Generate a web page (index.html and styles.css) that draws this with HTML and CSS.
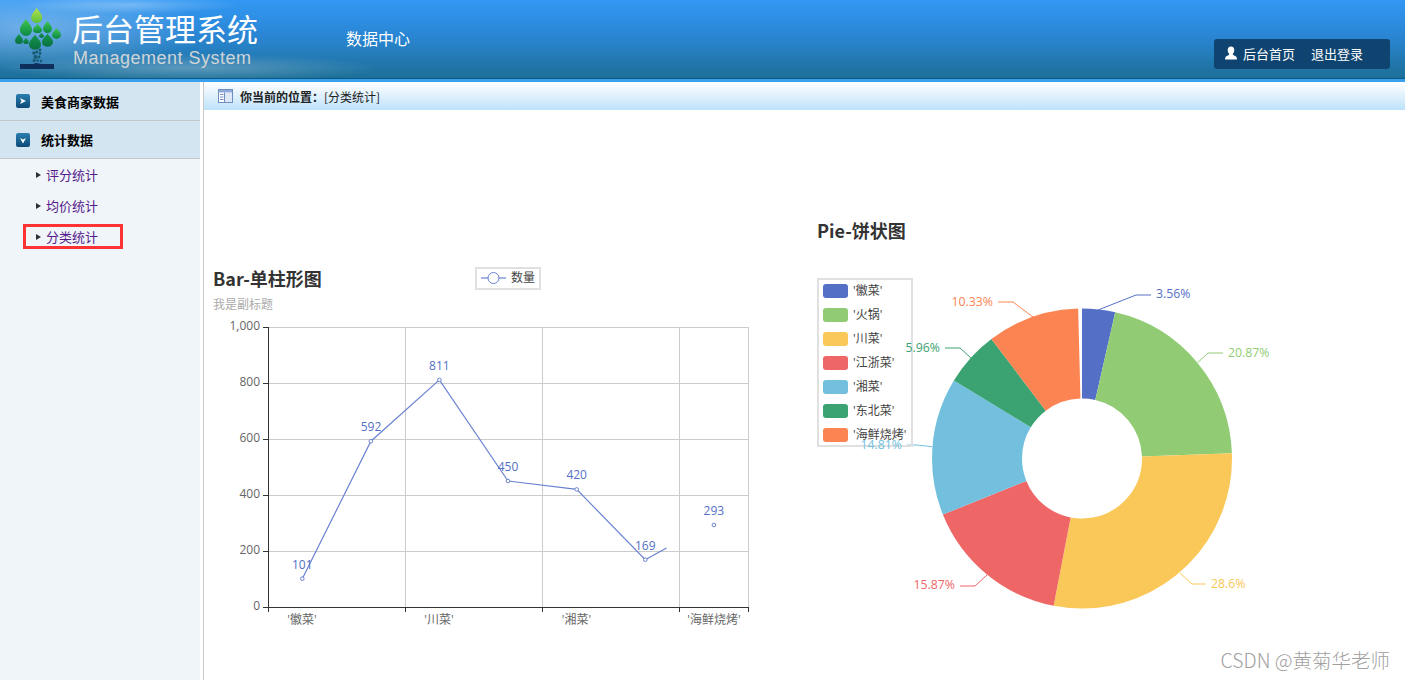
FILE: index.html
```html
<!DOCTYPE html>
<html lang="en">
<head>
    <meta charset="UTF-8">
    <title>后台管理系统</title>
    <link rel="stylesheet" href="styles.css">
</head>
<body>

<div class="header">
    <svg class="logo" viewBox="0 0 73 78" xmlns="http://www.w3.org/2000/svg">
        <defs>
            <linearGradient id="leafTop" x1="0" y1="0" x2="0" y2="1">
                <stop offset="0" stop-color="#b4e04a"></stop>
                <stop offset="1" stop-color="#5cc23e"></stop>
            </linearGradient>
            <linearGradient id="leaf" x1="0" y1="0" x2="0" y2="1">
                <stop offset="0" stop-color="#3fc850"></stop>
                <stop offset="1" stop-color="#0b8746"></stop>
            </linearGradient>
            <linearGradient id="leafDark" x1="0" y1="0" x2="0" y2="1">
                <stop offset="0" stop-color="#12964a"></stop>
                <stop offset="1" stop-color="#0a7044"></stop>
            </linearGradient>
            <path id="drop" d="M0 -11C3 -6 7 -3 7 2A7 7 0 0 1 -7 2C-7 -3 -3 -6 0 -11Z"></path>
        </defs>
        <use href="#drop" transform="translate(36.7 16.3) scale(.79 .75)" fill="url(#leafTop)"></use>
        <use href="#drop" transform="translate(26 28.4) scale(.86 .85)" fill="url(#leaf)"></use>
        <use href="#drop" transform="translate(37.5 29) scale(.64 .45)" fill="url(#leaf)"></use>
        <use href="#drop" transform="translate(47.5 27.6) scale(.64 .6)" fill="url(#leaf)"></use>
        <use href="#drop" transform="translate(56.5 34) scale(.64 .55)" fill="url(#leaf)"></use>
        <use href="#drop" transform="translate(19 39.5) scale(.57 .5)" fill="url(#leafDark)"></use>
        <use href="#drop" transform="translate(26 41.3) scale(.4 .3)" fill="url(#leafDark)"></use>
        <use href="#drop" transform="translate(35 43) scale(.86 .75)" fill="url(#leafDark)"></use>
        <use href="#drop" transform="translate(41.5 35.8) scale(.36 .25)" fill="url(#leafDark)"></use>
        <use href="#drop" transform="translate(47.5 41) scale(.79 .65)" fill="url(#leafDark)"></use>
        <g fill="#155a70">
            <circle cx="34" cy="53" r="1.8"></circle>
            <circle cx="37" cy="52" r="1.4"></circle>
            <circle cx="40" cy="50" r="1.4"></circle>
            <circle cx="40" cy="53.5" r="1.4"></circle>
            <circle cx="35.5" cy="57" r="2"></circle>
            <circle cx="39" cy="57" r="1.4"></circle>
            <circle cx="34" cy="60.5" r="1.5"></circle>
            <circle cx="37.5" cy="60.5" r="1.3"></circle>
            <circle cx="41" cy="61" r="1.2"></circle>
        </g>
        <path d="M20 64H33L36 63L42 64H54V69H20Z" fill="#0e2f5c"></path>
    </svg>
    <div class="brand">
        <div class="brand-title">后台管理系统</div>
        <div class="brand-sub">Management System</div>
    </div>
    <div class="top-nav">数据中心</div>
    <div class="user-box">
        <svg class="user-icon" viewBox="0 0 14 14" xmlns="http://www.w3.org/2000/svg">
            <path d="M7 0.5C9.2 0.5 10.3 2.2 10.3 4.2C10.3 5.8 9.6 7 8.8 7.8C8.6 8.6 9 9 10 9.4C12 10.1 13 10.8 13 13.5H1C1 10.8 2 10.1 4 9.4C5 9 5.4 8.6 5.2 7.8C4.4 7 3.7 5.8 3.7 4.2C3.7 2.2 4.8 0.5 7 0.5Z" fill="#fff"></path>
        </svg>
        <span>后台首页</span>
        <span>退出登录</span>
    </div>
</div>

<div class="page">
    <div class="sidebar">
        <div class="menu-title">
            <svg class="menu-icon" viewBox="0 0 14 14" xmlns="http://www.w3.org/2000/svg">
                <defs>
                    <linearGradient id="menuBlue" x1="0" y1="0" x2="0" y2="1">
                        <stop offset="0" stop-color="#2a7fb0"></stop>
                        <stop offset="1" stop-color="#0d4a78"></stop>
                    </linearGradient>
                </defs>
                <rect width="14" height="14" rx="2" fill="url(#menuBlue)"></rect>
                <path d="M4 4L10 7L4 10L5.5 7Z" fill="#fff"></path>
            </svg>
            美食商家数据
        </div>
        <div class="menu-title">
            <svg class="menu-icon" viewBox="0 0 14 14" xmlns="http://www.w3.org/2000/svg">
                <rect width="14" height="14" rx="2" fill="url(#menuBlue)"></rect>
                <path d="M4 5L7 6.5L10 5L7 10.5Z" fill="#fff"></path>
            </svg>
            统计数据
        </div>
        <ul class="sub-menu">
            <li><a href="#">评分统计</a></li>
            <li><a href="#">均价统计</a></li>
            <li class="marked"><a href="#">分类统计</a></li>
        </ul>
    </div>

    <div class="main">
        <div class="crumb">
            <svg class="crumb-icon" viewBox="0 0 15 14" xmlns="http://www.w3.org/2000/svg">
                <rect x="0.5" y="0.5" width="14" height="13" fill="#fff" stroke="#6f8fc4"></rect>
                <rect x="1" y="1" width="13" height="2.5" fill="#8fa9d8"></rect>
                <path d="M6.5 3.5V13.5" stroke="#6f8fc4"></path>
                <path d="M2 5.5H5.5M2 8H5.5M2 10.5H5.5" stroke="#6f8fc4"></path>
                <rect x="7" y="4" width="7" height="9" fill="#dfe8f6"></rect>
            </svg>
            <b>你当前的位置：</b>[分类统计]
        </div>
        <div class="charts">
            <!-- 折线图 -->
            <svg class="chart-bar" viewBox="204 110 600 570" xmlns="http://www.w3.org/2000/svg">
                <text class="chart-title" x="213" y="286">Bar-单柱形图</text>
                <text class="chart-sub" x="213" y="309">我是副标题</text>

                <rect class="legend-box" x="476" y="268" width="64" height="21"></rect>
                <path class="series" d="M481 278H506"></path>
                <circle class="series-dot" cx="493.5" cy="278" r="5.5"></circle>
                <text class="legend-text" x="511" y="282">数量</text>

                <path class="grid" d="M268.5 327.5H748.5M268.5 383.5H748.5M268.5 439.5H748.5M268.5 495.5H748.5M268.5 551.5H748.5"></path>
                <path class="grid" d="M405.5 327V607M542.5 327V607M679.5 327V607M748.5 327V607"></path>
                <path class="axis" d="M268.5 327V607.5M263 327.5H268M263 383.5H268M263 439.5H268M263 495.5H268M263 551.5H268M263 607.5H748.5"></path>
                <path class="axis" d="M268.5 607V612M405.5 607V612M542.5 607V612M679.5 607V612M748.5 607V612"></path>

                <text class="tick tick-y" x="260" y="330">1,000</text>
                <text class="tick tick-y" x="260" y="386">800</text>
                <text class="tick tick-y" x="260" y="442">600</text>
                <text class="tick tick-y" x="260" y="498">400</text>
                <text class="tick tick-y" x="260" y="554">200</text>
                <text class="tick tick-y" x="260" y="610">0</text>

                <text class="tick tick-x" x="302" y="624">'徽菜'</text>
                <text class="tick tick-x" x="439" y="624">'川菜'</text>
                <text class="tick tick-x" x="576.5" y="624">'湘菜'</text>
                <text class="tick tick-x" x="714" y="624">'海鲜烧烤'</text>

                <polyline class="series" points="302.3,578.7 370.9,441.2 439.4,379.9 508,481 576.7,489.4 645.3,559.7 666.5,548"></polyline>
                <circle class="point" cx="302.3" cy="578.7" r="1.8"></circle>
                <circle class="point" cx="370.9" cy="441.2" r="1.8"></circle>
                <circle class="point" cx="439.4" cy="379.9" r="1.8"></circle>
                <circle class="point" cx="508" cy="481" r="1.8"></circle>
                <circle class="point" cx="576.7" cy="489.4" r="1.8"></circle>
                <circle class="point" cx="645.3" cy="559.7" r="1.8"></circle>
                <circle class="point" cx="713.9" cy="525" r="1.8"></circle>

                <text class="value" x="302.3" y="569">101</text>
                <text class="value" x="371" y="431">592</text>
                <text class="value" x="439.4" y="370">811</text>
                <text class="value" x="508" y="471">450</text>
                <text class="value" x="576.7" y="479">420</text>
                <text class="value" x="645.3" y="550">169</text>
                <text class="value" x="713.9" y="515">293</text>
            </svg>

            <!-- 环形饼图 -->
            <svg class="chart-pie" viewBox="804 110 601 570" xmlns="http://www.w3.org/2000/svg">
                <text class="chart-title" x="817" y="238">Pie-饼状图</text>

                <g class="donut" transform="rotate(-90 1082 458.5)">
                    <circle cx="1082" cy="458.5" r="105" pathLength="100" stroke="#5470c6" stroke-dasharray="3.56 100"></circle>
                    <circle cx="1082" cy="458.5" r="105" pathLength="100" stroke="#91cc75" stroke-dasharray="20.87 100" stroke-dashoffset="-3.56"></circle>
                    <circle cx="1082" cy="458.5" r="105" pathLength="100" stroke="#fac858" stroke-dasharray="28.6 100" stroke-dashoffset="-24.43"></circle>
                    <circle cx="1082" cy="458.5" r="105" pathLength="100" stroke="#ee6666" stroke-dasharray="15.87 100" stroke-dashoffset="-53.03"></circle>
                    <circle cx="1082" cy="458.5" r="105" pathLength="100" stroke="#73c0de" stroke-dasharray="14.81 100" stroke-dashoffset="-68.9"></circle>
                    <circle cx="1082" cy="458.5" r="105" pathLength="100" stroke="#3ba272" stroke-dasharray="5.96 100" stroke-dashoffset="-83.71"></circle>
                    <circle cx="1082" cy="458.5" r="105" pathLength="100" stroke="#fc8452" stroke-dasharray="9.91 100" stroke-dashoffset="-89.67"></circle>
                </g>

                <polyline class="guide" stroke="#5470c6" points="1098,310 1136,295 1151,295"></polyline>
                <polyline class="guide" stroke="#91cc75" points="1197.7,362.7 1208,353 1223,353"></polyline>
                <polyline class="guide" stroke="#fac858" points="1180,573 1192,584 1206,584"></polyline>
                <polyline class="guide" stroke="#ee6666" points="987,575 975,586 960,586"></polyline>
                <polyline class="guide" stroke="#73c0de" points="932,446.7 917,445 907,445"></polyline>
                <polyline class="guide" stroke="#3ba272" points="971,358 960,348 945,348"></polyline>
                <polyline class="guide" stroke="#fc8452" points="1033,317 1013,302 998,302"></polyline>

                <rect class="legend-box" x="818" y="279" width="94" height="167"></rect>
                <rect x="823" y="284" width="25" height="14" rx="3" fill="#5470c6"></rect>
                <rect x="823" y="308" width="25" height="14" rx="3" fill="#91cc75"></rect>
                <rect x="823" y="332" width="25" height="14" rx="3" fill="#fac858"></rect>
                <rect x="823" y="356" width="25" height="14" rx="3" fill="#ee6666"></rect>
                <rect x="823" y="380" width="25" height="14" rx="3" fill="#73c0de"></rect>
                <rect x="823" y="404" width="25" height="14" rx="3" fill="#3ba272"></rect>
                <rect x="823" y="428" width="25" height="14" rx="3" fill="#fc8452"></rect>
                <text class="legend-text" x="853" y="295">'徽菜'</text>
                <text class="legend-text" x="853" y="319">'火锅'</text>
                <text class="legend-text" x="853" y="343">'川菜'</text>
                <text class="legend-text" x="853" y="367">'江浙菜'</text>
                <text class="legend-text" x="853" y="391">'湘菜'</text>
                <text class="legend-text" x="853" y="415">'东北菜'</text>
                <text class="legend-text" x="853" y="439">'海鲜烧烤'</text>

                <text class="pie-label" x="1156" y="298" fill="#5470c6">3.56%</text>
                <text class="pie-label" x="1228" y="357" fill="#91cc75">20.87%</text>
                <text class="pie-label" x="1211" y="588" fill="#fac858">28.6%</text>
                <text class="pie-label label-end" x="955" y="589" fill="#ee6666">15.87%</text>
                <text class="pie-label label-end" x="902" y="449" fill="#73c0de">14.81%</text>
                <text class="pie-label label-end" x="940" y="352" fill="#3ba272">5.96%</text>
                <text class="pie-label label-end" x="993" y="306" fill="#fc8452">10.33%</text>
            </svg>
        </div>
    </div>
</div>

<div class="watermark">CSDN @黄菊华老师</div>

</body>
</html>
```

FILE: styles.css
```css
* {
    box-sizing: border-box;
}
html, body {
    margin: 0;
    height: 100%;
    overflow: hidden;
}
body {
    position: relative;
    display: flex;
    flex-direction: column;
    font-family: "Noto Sans CJK SC", "Liberation Sans", sans-serif;
    font-size: 12px;
    color: #333;
    background: #fff;
}

/* 顶部 */
.header {
    display: flex;
    flex: none;
    height: 82px;
    color: #fff;
    border-bottom: 3px solid #3aa0ee;
    box-shadow: inset 0 -1px 0 #0a5a86;
    background:
        radial-gradient(ellipse 110px 9px at 130px 5px, rgba(255, 255, 255, .28), rgba(255, 255, 255, 0)),
        radial-gradient(ellipse 190px 14px at 190px 68px, rgba(225, 235, 240, .3), rgba(255, 255, 255, 0)),
        radial-gradient(ellipse 170px 45px at 30px 28px, rgba(255, 255, 255, .32), rgba(255, 255, 255, 0)),
        linear-gradient(to bottom, #3298f4 0%, #2a86d4 45%, #1c6f96 100%);
}
.logo {
    flex: none;
    width: 73px;
    height: 78px;
}
.brand {
    flex: none;
    width: 273px;
    padding-top: 8px;
}
.brand-title {
    margin-left: -1px;
    font-size: 31px;
    line-height: 40px;
    font-weight: 400;
}
.brand-sub {
    font-family: "Liberation Sans", sans-serif;
    font-size: 18px;
    line-height: 20px;
    letter-spacing: .5px;
    color: #d0d4d6;
}
.top-nav {
    font-size: 16px;
    line-height: 24px;
    margin-top: 26px;
}
.user-box {
    display: flex;
    align-items: center;
    gap: 16px;
    width: 176px;
    height: 30px;
    margin: 39px 15px 0 auto;
    padding: 0 0 2px 10px;
    font-size: 13px;
    background: #0f4470;
    border-radius: 3px;
}
.user-icon {
    width: 14px;
    height: 14px;
    margin-right: -11px;
}

.page {
    display: flex;
    flex: 1;
    min-height: 0;
}

/* 左侧菜单 */
.sidebar {
    flex: none;
    width: 203px;
    background: #f0f5f9;
    border-right: 3px solid #fff;
}
.menu-title {
    display: flex;
    align-items: center;
    gap: 11px;
    height: 38px;
    padding-left: 16px;
    font-size: 13px;
    font-weight: bold;
    color: #000;
    background: #d3e5f0;
    border-bottom: 1px solid #c6c9cb;
}
.menu-title:first-child {
    height: 39px;
}
.menu-icon {
    width: 14px;
    height: 14px;
}
.sub-menu {
    list-style: none;
    margin: 0;
    padding: 0 0 0 23px;
}
.sub-menu li {
    position: relative;
    width: 100px;
    height: 31px;
    line-height: 31px;
    padding-left: 23px;
    font-size: 13px;
}
.sub-menu li:before {
    content: "";
    position: absolute;
    left: 13px;
    top: 13px;
    border-left: 5px solid #2b2f3a;
    border-top: 3.5px solid transparent;
    border-bottom: 3.5px solid transparent;
}
.sub-menu a {
    color: #551a8b;
    text-decoration: none;
}
.sub-menu .marked:after {
    content: "";
    box-sizing: border-box;
    position: absolute;
    left: 0;
    top: 3px;
    width: 100px;
    height: 25px;
    border: 3px solid #f33;
}

/* 右侧内容 */
.main {
    display: flex;
    flex-direction: column;
    flex: 1;
    min-width: 0;
    border-left: 1px solid #c8c8c8;
}
.crumb {
    display: flex;
    align-items: center;
    flex: none;
    height: 28px;
    padding-left: 14px;
    font-size: 12px;
    color: #222;
    border-top-left-radius: 5px;
    background: linear-gradient(to bottom, #fff 0%, #e9f5fd 35%, #bde2fa 100%);
}
.crumb b {
    margin-left: 7px;
}
.crumb-icon {
    width: 15px;
    height: 14px;
}
.charts {
    display: flex;
    flex: 1;
    min-height: 0;
}
.chart-bar {
    flex: none;
    width: 600px;
    height: 570px;
}
.chart-pie {
    flex: none;
    width: 601px;
    height: 570px;
}

/* 图表文字 */
.chart-title {
    font-size: 18px;
    font-weight: bold;
    fill: #333;
}
.chart-sub {
    font-size: 12px;
    fill: #aaa;
}
.legend-box {
    fill: none;
    stroke: #e0e0e0;
    stroke-width: 2;
}
.legend-text {
    font-family: "Open Sans", "Noto Sans CJK SC", sans-serif;
    font-size: 12px;
    fill: #444;
}
.tick {
    font-family: "Open Sans", "Noto Sans CJK SC", sans-serif;
    font-size: 12px;
    fill: #666;
}
.tick-y {
    text-anchor: end;
}
.tick-x {
    text-anchor: middle;
}
.value {
    font-family: "Open Sans", "Noto Sans CJK SC", sans-serif;
    font-size: 12px;
    fill: #5470c6;
    text-anchor: middle;
}
.grid {
    fill: none;
    stroke: #ccc;
}
.axis {
    fill: none;
    stroke: #333;
}
.series {
    fill: none;
    stroke: #6a83d0;
    stroke-width: 1.2;
}
.series-dot {
    fill: #fff;
    stroke: #6a83d0;
}
.point {
    fill: #fff;
    stroke: #6a83d0;
}
.donut circle {
    fill: none;
    stroke-width: 90;
}
.guide {
    fill: none;
}
.pie-label {
    font-family: "Open Sans", "Noto Sans CJK SC", sans-serif;
    font-size: 12.3px;
}
.label-end {
    text-anchor: end;
}

.watermark {
    position: absolute;
    right: 15px;
    bottom: 6px;
    font-size: 19.5px;
    font-weight: 300;
    color: #a0a0a0;
}
```
